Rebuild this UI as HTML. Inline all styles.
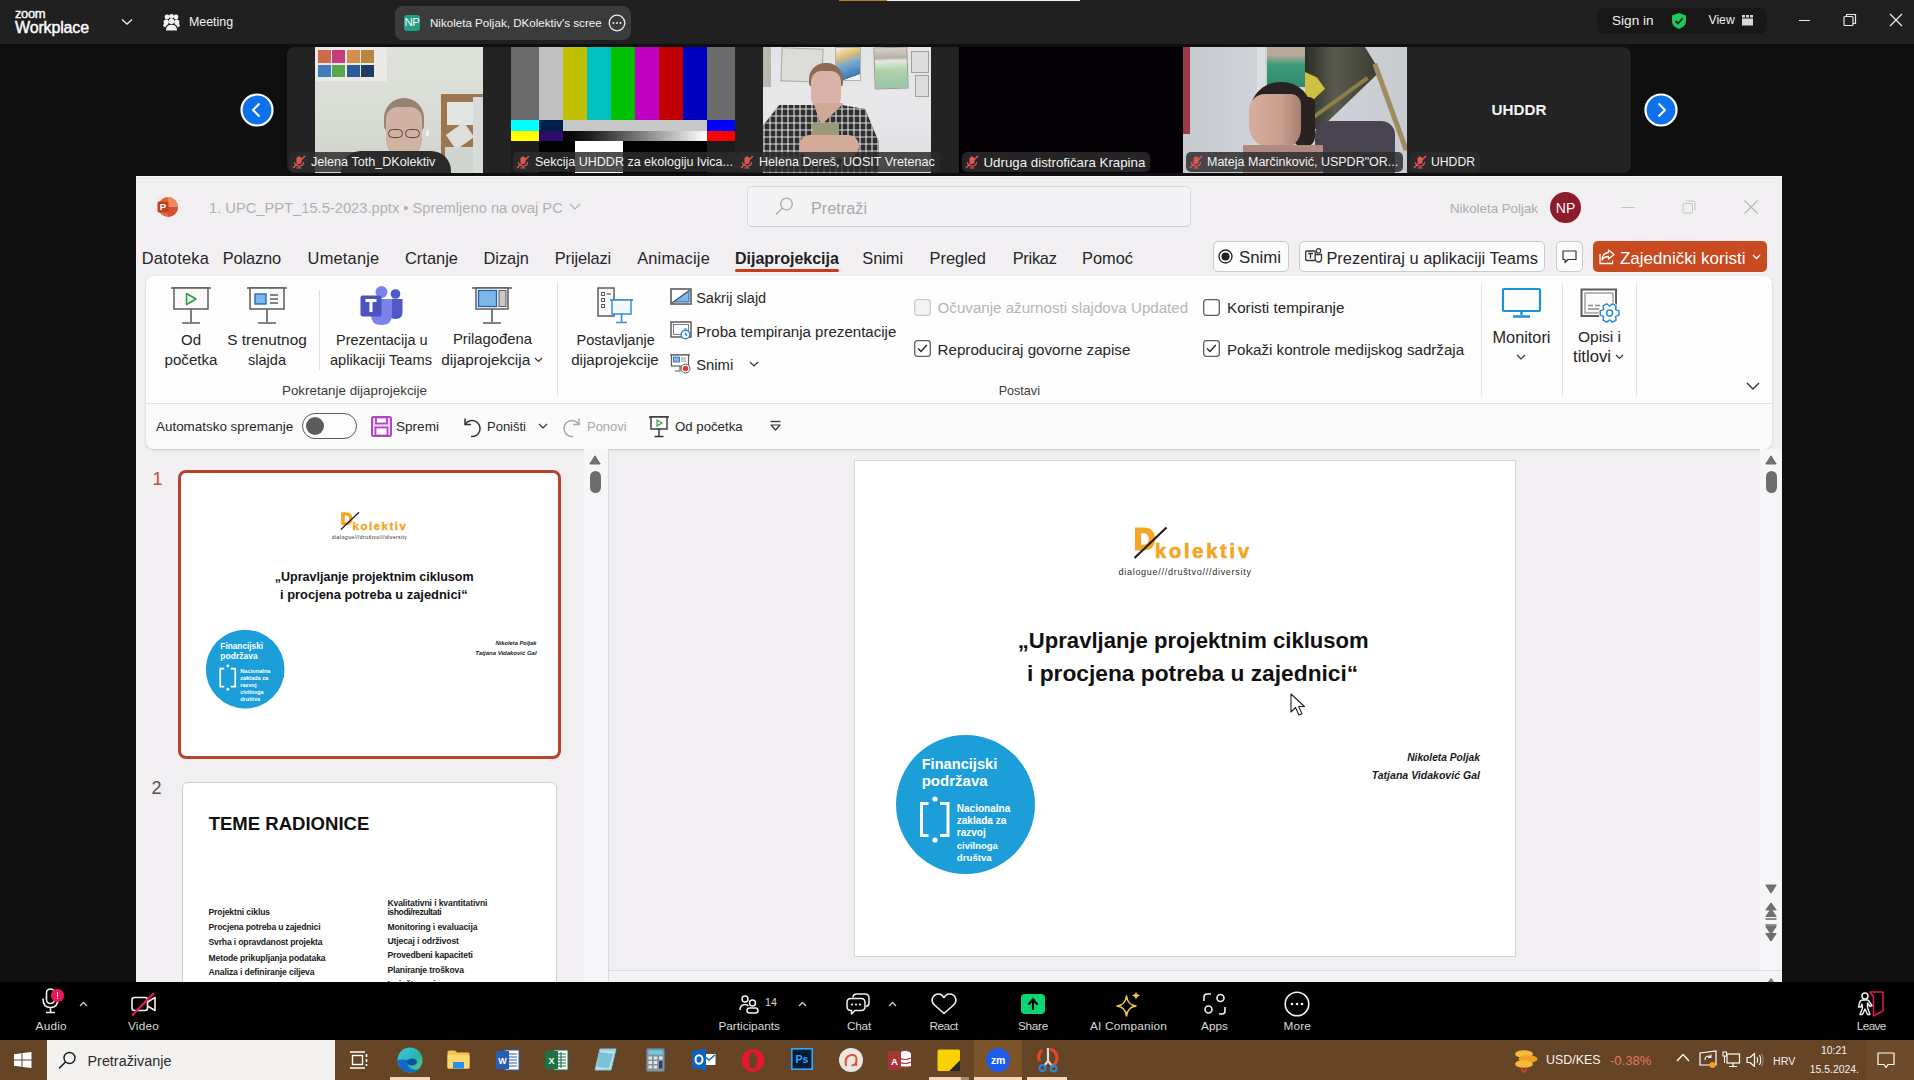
<!DOCTYPE html>
<html><head><meta charset="utf-8">
<style>
*{margin:0;padding:0;box-sizing:border-box}
html,body{width:1914px;height:1080px;overflow:hidden;background:#0f0f0f;font-family:"Liberation Sans",sans-serif}
.a{position:absolute}
.t{position:absolute;white-space:nowrap;line-height:1}
svg{position:absolute;overflow:visible}
</style></head><body>
<div class="a" style="left:0px;top:44px;width:1914px;height:132px;background:#0f0f0f"></div>
<!-- ZOOM TOP BAR -->
<div class="a" style="left:0;top:0;width:1914px;height:44px;background:#202020"></div>
<div class="a" style="left:839px;top:0;width:48px;height:1px;background:#b87a30"></div>
<div class="a" style="left:887px;top:0;width:193px;height:1px;background:#f4f4f4"></div>

<!-- VIDEO STRIP -->
<div id="strip" class="a" style="left:0;top:44px;width:1914px;height:132px;background:#0f0f0f"></div>

<!-- top bar content -->
<div class="t" style="left:15px;top:7px;font-size:13px;color:#fff;letter-spacing:-0.4px;-webkit-text-stroke:0.35px #fff">zoom</div>
<div class="t" style="left:15px;top:20px;font-size:16px;color:#fff;letter-spacing:-0.15px;-webkit-text-stroke:0.4px #fff">Workplace</div>
<svg style="left:121px;top:18px" width="12" height="8"><path d="M1 1.5 L6 6 L11 1.5" stroke="#e8e8e8" stroke-width="1.4" fill="none"/></svg>
<svg style="left:163px;top:14px" width="17" height="17" viewBox="0 0 17 17"><g fill="#f2f2f2"><circle cx="4" cy="3" r="2.4"/><circle cx="8.5" cy="2.3" r="2.4"/><circle cx="13" cy="3" r="2.4"/><circle cx="3.2" cy="8" r="2.6"/><circle cx="13.8" cy="8" r="2.6"/><circle cx="8.5" cy="7.3" r="2.8"/><path d="M3 16.5 Q3 10.8 8.5 10.8 Q14 10.8 14 16.5 Z"/><path d="M0 12 Q0 9.5 3 9.5 L5 10.5 Q2 12 2.5 13.5Z"/><path d="M17 12 Q17 9.5 14 9.5 L12 10.5 Q15 12 14.5 13.5Z"/></g></svg>
<div class="t" style="left:189px;top:16px;font-size:12.4px;color:#f0f0f0">Meeting</div>
<div class="a" style="left:395px;top:6px;width:236px;height:34px;background:#3b3b3b;border-radius:8px"></div>
<div class="a" style="left:404px;top:15px;width:16px;height:16px;background:#23a084;border-radius:3px"></div>
<div class="t" style="left:404px;top:17px;width:16px;text-align:center;font-size:11.5px;color:#f4f4f4;letter-spacing:-0.6px">NP</div>
<div class="t" style="left:430px;top:17px;font-size:11.6px;color:#f4f4f4">Nikoleta Poljak, DKolektiv's scree</div>
<svg style="left:608px;top:14px" width="18" height="18"><circle cx="9" cy="9" r="7.8" stroke="#e8e8e8" stroke-width="1.3" fill="none"/><circle cx="5.5" cy="9" r="1" fill="#e8e8e8"/><circle cx="9" cy="9" r="1" fill="#e8e8e8"/><circle cx="12.5" cy="9" r="1" fill="#e8e8e8"/></svg>

<div class="a" style="left:1597px;top:8px;width:170px;height:26px;background:#181818;border-radius:8px"></div>
<div class="t" style="left:1612px;top:14px;font-size:13.6px;color:#f0f0f0">Sign in</div>
<svg style="left:1670px;top:12px" width="18" height="18" viewBox="0 0 18 18"><path d="M9 1 L16 3.5 L16 9 Q16 14.5 9 17 Q2 14.5 2 9 L2 3.5 Z" fill="#22c55e"/><path d="M5.5 9 L8 11.5 L12.5 6.5" stroke="#0f2e14" stroke-width="1.8" fill="none"/></svg>
<div class="t" style="left:1708.5px;top:14px;font-size:12.2px;color:#f0f0f0">View</div>
<svg style="left:1742px;top:15px" width="11" height="11"><rect x="0" y="3.5" width="11" height="7" fill="#d8d8d8"/><rect x="0" y="0" width="3" height="2.5" fill="#d8d8d8"/><rect x="4" y="0" width="3" height="2.5" fill="#d8d8d8"/><rect x="8" y="0" width="3" height="2.5" fill="#d8d8d8"/></svg>
<div class="a" style="left:1799px;top:19.5px;width:11px;height:1.2px;background:#e8e8e8"></div>
<svg style="left:1843px;top:13px" width="14" height="14"><rect x="1" y="3.5" width="9" height="9" stroke="#e8e8e8" stroke-width="1.2" fill="none" rx="1"/><path d="M3.5 3.5 V1.5 H12.5 V10.5 H10" stroke="#e8e8e8" stroke-width="1.2" fill="none"/></svg>
<svg style="left:1889px;top:13px" width="14" height="14"><path d="M1 1 L13 13 M13 1 L1 13" stroke="#e8e8e8" stroke-width="1.3"/></svg>

<!-- VIDEO STRIP content -->
<div class="a" style="left:287px;top:47px;width:1344px;height:126px;background:#232323;border-radius:8px"></div>
<!-- arrows -->
<svg style="left:240px;top:93px" width="34" height="34"><circle cx="17" cy="17" r="15.5" fill="#0e71eb" stroke="#fff" stroke-width="2.2"/><path d="M19.5 10.5 L13 17 L19.5 23.5" stroke="#fff" stroke-width="2" fill="none"/></svg>
<svg style="left:1644px;top:93px" width="34" height="34"><circle cx="17" cy="17" r="15.5" fill="#0e71eb" stroke="#fff" stroke-width="2.2"/><path d="M14.5 10.5 L21 17 L14.5 23.5" stroke="#fff" stroke-width="2" fill="none"/></svg>

<!-- tile1 Jelena -->
<div class="a" style="left:315px;top:47px;width:168px;height:126px;overflow:hidden;background:linear-gradient(180deg,#dde1da 0%,#d8dcd5 55%,#cfd3cc 100%)">
  <div class="a" style="left:0;top:0;width:72px;height:34px;background:#e9e9e6"></div>
  <div class="a" style="left:2.5px;top:3px;width:13px;height:12.5px;background:#cf6a4c"></div>
  <div class="a" style="left:17px;top:3px;width:13px;height:12.5px;background:#c73c7c"></div>
  <div class="a" style="left:31.5px;top:3px;width:13px;height:12.5px;background:#d68d4f"></div>
  <div class="a" style="left:46px;top:3px;width:13px;height:12.5px;background:#b8863e"></div>
  <div class="a" style="left:2.5px;top:17.5px;width:13px;height:12.5px;background:#3f7dbf"></div>
  <div class="a" style="left:17px;top:17.5px;width:13px;height:12.5px;background:#5aa64a"></div>
  <div class="a" style="left:31.5px;top:17.5px;width:13px;height:12.5px;background:#2c5b9b"></div>
  <div class="a" style="left:46px;top:17.5px;width:13px;height:12.5px;background:#203c63"></div>
  <div class="a" style="left:126px;top:47px;width:42px;height:79px;background:#9c764e"></div>
  <div class="a" style="left:132px;top:55px;width:27px;height:23px;background:#e2e5e2"></div>
  <div class="a" style="left:134px;top:80px;width:22px;height:18px;background:#dcdfdc;transform:rotate(-35deg)"></div>
  <div class="a" style="left:158px;top:50px;width:10px;height:76px;background:#d8dad8"></div>
  <div class="a" style="left:130px;top:100px;width:28px;height:26px;background:#d0d4ce"></div>
  <div class="a" style="left:69px;top:51px;width:40px;height:34px;background:#958472;border-radius:20px 20px 6px 6px"></div>
  <div class="a" style="left:71px;top:60px;width:36px;height:50px;background:#cfb2a2;border-radius:12px 12px 16px 16px"></div>
  <div class="a" style="left:73px;top:82px;width:15px;height:9px;border:1px solid #5a4038;border-radius:5px"></div>
  <div class="a" style="left:90px;top:82px;width:15px;height:9px;border:1px solid #5a4038;border-radius:5px"></div>
  <div class="a" style="left:111px;top:83px;width:3px;height:6px;background:#f0f0f0;border-radius:2px"></div>
  <div class="a" style="left:26px;top:104px;width:110px;height:26px;background:#2a2a2c;border-radius:20px 20px 0 0"></div>
</div>
<!-- tile2 colorbars -->
<div class="a" style="left:511px;top:47px;width:224px;height:126px;overflow:hidden;background:#1c1c1c">
  <div class="a" style="left:0;top:0;width:28px;height:73px;background:#6b6b6b"></div>
  <div class="a" style="left:28px;top:0;width:24px;height:73px;background:#c0c0c0"></div>
  <div class="a" style="left:52px;top:0;width:24px;height:73px;background:#c0c000"></div>
  <div class="a" style="left:76px;top:0;width:24px;height:73px;background:#00c0c0"></div>
  <div class="a" style="left:100px;top:0;width:24px;height:73px;background:#00c000"></div>
  <div class="a" style="left:124px;top:0;width:24px;height:73px;background:#c000c0"></div>
  <div class="a" style="left:148px;top:0;width:24px;height:73px;background:#c00000"></div>
  <div class="a" style="left:172px;top:0;width:24px;height:73px;background:#0000c0"></div>
  <div class="a" style="left:196px;top:0;width:28px;height:73px;background:#6b6b6b"></div>
  <div class="a" style="left:0;top:73px;width:28px;height:11px;background:#00ffff"></div>
  <div class="a" style="left:28px;top:73px;width:24px;height:11px;background:#00204c"></div>
  <div class="a" style="left:52px;top:73px;width:144px;height:11px;background:#c8c8c8"></div>
  <div class="a" style="left:196px;top:73px;width:28px;height:11px;background:#0000ff"></div>
  <div class="a" style="left:0;top:84px;width:28px;height:10px;background:#ffff00"></div>
  <div class="a" style="left:28px;top:84px;width:24px;height:10px;background:#2f0a6e"></div>
  <div class="a" style="left:52px;top:84px;width:144px;height:10px;background:linear-gradient(90deg,#000,#202020 20%,#808080 55%,#fff)"></div>
  <div class="a" style="left:196px;top:84px;width:28px;height:10px;background:#ff0000"></div>
  <div class="a" style="left:28px;top:94px;width:168px;height:32px;background:#020202"></div>
  <div class="a" style="left:64px;top:94px;width:48px;height:32px;background:#ffffff"></div>
</div>
<!-- tile3 Helena -->
<div class="a" style="left:763px;top:47px;width:168px;height:126px;overflow:hidden;background:linear-gradient(180deg,#e4e4e6,#e8e8ea 50%,#dcdcde)">
  <div class="a" style="left:0;top:0;width:8px;height:40px;background:#b8b8b0"></div>
  <div class="a" style="left:18px;top:1px;width:42px;height:34px;background:#dcdcd8;border:1px solid #a8a8a4;transform:rotate(2deg)"></div>
  <div class="a" style="left:72px;top:0px;width:26px;height:34px;background:linear-gradient(160deg,#f0f0f0 0,#e8c070 25%,#78a8d0 50%,#3a7ab8 85%,#f0f0f0 86%);border:1px solid #b0b0b0"></div>
  <div class="a" style="left:111px;top:0px;width:34px;height:42px;background:linear-gradient(180deg,#d8d0c8 0,#b8b0a8 25%,#e4e8e0 32%,#b0d4a8 55%,#98c4a8 100%);border:1px solid #9a9a9a;transform:rotate(-2deg)"></div>
  <div class="a" style="left:148px;top:4px;width:18px;height:22px;border:1px solid #a0a0a0;background:#dcdcdc"></div>
  <div class="a" style="left:152px;top:28px;width:14px;height:22px;border:1px solid #a0a0a0;background:#dcdcdc"></div>
  <div class="a" style="left:46px;top:16px;width:34px;height:24px;background:#8e6a50;border-radius:16px 16px 4px 4px"></div>
  <div class="a" style="left:48px;top:24px;width:30px;height:40px;background:#d8b4a8;border-radius:10px 10px 14px 14px"></div>
  <div class="a" style="left:50px;top:56px;width:30px;height:30px;background:#cfa898"></div>
  <div class="a" style="left:0;top:58px;width:116px;height:68px;background:repeating-linear-gradient(90deg,rgba(230,230,230,0.55) 0 2px,transparent 2px 6px),repeating-linear-gradient(0deg,rgba(220,220,220,0.5) 0 2px,transparent 2px 7px),#2e2e2e;clip-path:polygon(14% 0,44% 0,50% 30%,68% 0,88% 6%,100% 55%,100% 100%,0 100%,0 30%)"></div>
  <div class="a" style="left:50px;top:76px;width:26px;height:16px;background:#9a9a78"></div>
  <div class="a" style="left:36px;top:88px;width:60px;height:22px;background:#d4aa98;border-radius:14px"></div>
</div>
<!-- tile4 dark -->
<div class="a" style="left:959px;top:47px;width:224px;height:126px;background:#040006"></div>
<!-- tile5 Mateja -->
<div class="a" style="left:1183px;top:47px;width:224px;height:126px;overflow:hidden;background:linear-gradient(90deg,#c6cacf,#d0d4d8 35%,#cdd1d5 70%,#c8ccd0)">
  <div class="a" style="left:0;top:0;width:7px;height:87px;background:#9a3a4a"></div>
  <div class="a" style="left:74px;top:0;width:8px;height:126px;background:#dcdee0"></div>
  <div class="a" style="left:84px;top:0;width:40px;height:40px;background:linear-gradient(180deg,#b8a898 0,#b8a898 20%,#3a9a7a 45%,#2f8a6c)"></div>
  <div class="a" style="left:122px;top:0;width:75px;height:82px;background:linear-gradient(90deg,#2c3026,#5a5a50 40%,#3a3c30);clip-path:polygon(0 0,80% 0,100% 30%,20% 100%,0 100%)"></div>
  <div class="a" style="left:122px;top:25px;width:20px;height:28px;background:#d0c040;clip-path:polygon(0 0,60% 20%,100% 60%,40% 100%,0 90%)"></div>
  <div class="a" style="left:130px;top:68px;width:66px;height:4px;background:#8c7e48;transform:rotate(-36deg);transform-origin:0 0"></div>
  <div class="a" style="left:205px;top:14px;width:5px;height:92px;background:#a08a60;transform:rotate(-20deg)"></div>
  <div class="a" style="left:132px;top:74px;width:80px;height:56px;background:#4a4450;border-radius:14px 14px 0 0"></div>
  <div class="a" style="left:67px;top:35px;width:62px;height:50px;background:#2a2220;border-radius:30px 30px 10px 10px"></div>
  <div class="a" style="left:110px;top:50px;width:22px;height:50px;background:#2a2220;border-radius:6px 6px 10px 10px"></div>
  <div class="a" style="left:66px;top:47px;width:52px;height:55px;background:linear-gradient(90deg,#d8ae9c,#c8a090 60%,#a88070);border-radius:16px 10px 20px 24px"></div>
  <div class="a" style="left:60px;top:98px;width:80px;height:28px;background:#b08a80"></div>
</div>
<!-- tile6 UHDDR -->
<div class="t" style="left:1407px;top:102px;width:224px;text-align:center;font-size:15.2px;font-weight:bold;color:#f4f4f4">UHDDR</div>

<!-- labels -->
<div class="a" style="left:289px;top:152px;width:151.4px;height:20px;background:rgba(44,44,44,0.84);border-radius:5px"></div>
<svg style="left:292px;top:155px" width="14" height="14" viewBox="0 0 14 14"><rect x="4.5" y="1.5" width="5" height="7.5" rx="2.5" fill="#e05656"/><path d="M2.5 7 Q2.5 11 7 11 Q11.5 11 11.5 7 M7 11 V13 M4.5 13 H9.5" stroke="#e05656" stroke-width="1.2" fill="none"/><path d="M1 13 L13 1" stroke="#e05656" stroke-width="1.4"/></svg>
<div class="t" style="left:311px;top:156px;font-size:12.6px;color:#f2f2f2">Jelena Toth_DKolektiv</div>
<div class="a" style="left:513px;top:152px;width:225.0px;height:20px;background:rgba(44,44,44,0.84);border-radius:5px"></div>
<svg style="left:516px;top:155px" width="14" height="14" viewBox="0 0 14 14"><rect x="4.5" y="1.5" width="5" height="7.5" rx="2.5" fill="#e05656"/><path d="M2.5 7 Q2.5 11 7 11 Q11.5 11 11.5 7 M7 11 V13 M4.5 13 H9.5" stroke="#e05656" stroke-width="1.2" fill="none"/><path d="M1 13 L13 1" stroke="#e05656" stroke-width="1.4"/></svg>
<div class="t" style="left:535px;top:156px;font-size:12.5px;color:#f2f2f2">Sekcija UHDDR za ekologiju Ivica...</div>
<div class="a" style="left:737px;top:152px;width:202.8px;height:20px;background:rgba(44,44,44,0.84);border-radius:5px"></div>
<svg style="left:740px;top:155px" width="14" height="14" viewBox="0 0 14 14"><rect x="4.5" y="1.5" width="5" height="7.5" rx="2.5" fill="#e05656"/><path d="M2.5 7 Q2.5 11 7 11 Q11.5 11 11.5 7 M7 11 V13 M4.5 13 H9.5" stroke="#e05656" stroke-width="1.2" fill="none"/><path d="M1 13 L13 1" stroke="#e05656" stroke-width="1.4"/></svg>
<div class="t" style="left:759px;top:156px;font-size:12.6px;color:#f2f2f2">Helena Dereš, UOSIT Vretenac</div>
<div class="a" style="left:962px;top:152px;width:188.4px;height:20px;background:rgba(44,44,44,0.84);border-radius:5px"></div>
<svg style="left:965px;top:155px" width="14" height="14" viewBox="0 0 14 14"><rect x="4.5" y="1.5" width="5" height="7.5" rx="2.5" fill="#e05656"/><path d="M2.5 7 Q2.5 11 7 11 Q11.5 11 11.5 7 M7 11 V13 M4.5 13 H9.5" stroke="#e05656" stroke-width="1.2" fill="none"/><path d="M1 13 L13 1" stroke="#e05656" stroke-width="1.4"/></svg>
<div class="t" style="left:983.5px;top:156px;font-size:13.3px;color:#f2f2f2">Udruga distrofičara Krapina</div>
<div class="a" style="left:1186px;top:152px;width:217.3px;height:20px;background:rgba(44,44,44,0.84);border-radius:5px"></div>
<svg style="left:1189px;top:155px" width="14" height="14" viewBox="0 0 14 14"><rect x="4.5" y="1.5" width="5" height="7.5" rx="2.5" fill="#e05656"/><path d="M2.5 7 Q2.5 11 7 11 Q11.5 11 11.5 7 M7 11 V13 M4.5 13 H9.5" stroke="#e05656" stroke-width="1.2" fill="none"/><path d="M1 13 L13 1" stroke="#e05656" stroke-width="1.4"/></svg>
<div class="t" style="left:1207px;top:156px;font-size:12.5px;color:#f2f2f2">Mateja Marčinković, USPDR"OR...</div>
<div class="a" style="left:1410px;top:152px;width:70.1px;height:20px;background:rgba(44,44,44,0.84);border-radius:5px"></div>
<svg style="left:1413px;top:155px" width="14" height="14" viewBox="0 0 14 14"><rect x="4.5" y="1.5" width="5" height="7.5" rx="2.5" fill="#e05656"/><path d="M2.5 7 Q2.5 11 7 11 Q11.5 11 11.5 7 M7 11 V13 M4.5 13 H9.5" stroke="#e05656" stroke-width="1.2" fill="none"/><path d="M1 13 L13 1" stroke="#e05656" stroke-width="1.4"/></svg>
<div class="t" style="left:1431px;top:156px;font-size:12.2px;color:#f2f2f2">UHDDR</div>



<div class="a" style="left:136px;top:176px;width:1646px;height:806px;background:#f1eff2"></div>
<div class="a" style="left:136px;top:176px;width:1646px;height:1px;background:#fafafa"></div>
<svg style="left:157px;top:197px" width="21" height="21"><circle cx="11" cy="10" r="10" fill="#e0683e"/><path d="M11 0 A10 10 0 0 1 21 10 L11 10Z" fill="#f08a5e"/><path d="M11 10 L21 10 A10 10 0 0 1 11 20Z" fill="#d2522c"/><rect x="0.5" y="4.5" width="11" height="11" rx="1.5" fill="#c1401e"/><text x="6" y="13.3" font-size="9.5" font-weight="bold" fill="#fff" text-anchor="middle" font-family="Liberation Sans">P</text></svg>
<div class="t" style="left:209.00px;top:200.56px;font-size:14.70px;color:#b0b0b0">1. UPC_PPT_15.5-2023.pptx • Spremljeno na ovaj PC</div>
<svg style="left:569px;top:203px" width="12" height="7"><path d="M1 1 L6 6 L11 1" stroke="#b0b0b0" stroke-width="1.2" fill="none"/></svg>
<div class="a" style="left:747px;top:186px;width:444px;height:41px;background:#f3f2f5;border:1px solid #d9d8db;border-bottom-color:#c9c8cb;border-radius:5px"></div>
<svg style="left:775px;top:197px" width="19" height="19"><circle cx="11.5" cy="7" r="5.8" stroke="#a9a9a9" stroke-width="1.3" fill="none"/><path d="M7.3 11.2 L1 17.5" stroke="#a9a9a9" stroke-width="1.4"/></svg>
<div class="t" style="left:811.00px;top:200.24px;font-size:16.25px;color:#a9a9a9">Pretraži</div>
<div class="t" style="left:1450.00px;top:201.74px;font-size:13.30px;color:#ababab">Nikoleta Poljak</div>
<div class="a" style="left:1550px;top:192px;width:31px;height:31px;background:#8c1b2c;border-radius:50%"></div>
<div class="t" style="left:1555.78px;top:201.15px;font-size:14.00px;color:#f4f4f4">NP</div>
<div class="a" style="left:1621px;top:207px;width:14px;height:1px;background:#c2c2c2"></div>
<svg style="left:1682px;top:200px" width="14" height="14"><rect x="1" y="3.5" width="9.5" height="9.5" rx="1.5" stroke="#c2c2c2" stroke-width="1" fill="none"/><path d="M3.5 1 H11 Q13 1 13 3 V10.5" stroke="#c2c2c2" stroke-width="1" fill="none"/></svg>
<svg style="left:1744px;top:200px" width="14" height="14"><path d="M0.5 0.5 L13.5 13.5 M13.5 0.5 L0.5 13.5" stroke="#b8b8b8" stroke-width="1.2"/></svg>
<div class="t" style="left:141.70px;top:250.42px;font-size:16.40px;color:#262626;letter-spacing:0.220px">Datoteka</div>
<div class="t" style="left:222.70px;top:250.42px;font-size:16.40px;color:#262626;letter-spacing:-0.138px">Polazno</div>
<div class="t" style="left:307.60px;top:250.42px;font-size:16.40px;color:#262626;letter-spacing:0.214px">Umetanje</div>
<div class="t" style="left:405.00px;top:250.42px;font-size:16.40px;color:#262626;letter-spacing:0.019px">Crtanje</div>
<div class="t" style="left:483.40px;top:250.42px;font-size:16.40px;color:#262626;letter-spacing:0.004px">Dizajn</div>
<div class="t" style="left:554.80px;top:250.42px;font-size:16.40px;color:#262626;letter-spacing:-0.135px">Prijelazi</div>
<div class="t" style="left:637.20px;top:250.42px;font-size:16.40px;color:#262626;letter-spacing:0.189px">Animacije</div>
<div class="t" style="left:862.30px;top:250.42px;font-size:16.40px;color:#262626;letter-spacing:-0.062px">Snimi</div>
<div class="t" style="left:929.60px;top:250.42px;font-size:16.40px;color:#262626;letter-spacing:-0.019px">Pregled</div>
<div class="t" style="left:1012.70px;top:250.42px;font-size:16.40px;color:#262626;letter-spacing:-0.261px">Prikaz</div>
<div class="t" style="left:1082.00px;top:250.42px;font-size:16.40px;color:#262626;letter-spacing:-0.009px">Pomoć</div>
<div class="t" style="left:735.00px;top:250.76px;font-size:16.00px;color:#1f1f1f;font-weight:bold;letter-spacing:-0.018px">Dijaprojekcija</div>
<div class="a" style="left:735px;top:269px;width:104px;height:3px;background:#c43e1c;border-radius:2px"></div>
<div class="a" style="left:1213px;top:241px;width:76px;height:31px;background:#fbfbfc;border:1px solid #c9c9cc;border-radius:5px"></div>
<svg style="left:1218px;top:249px" width="15" height="15"><circle cx="7.5" cy="7.5" r="6.5" stroke="#222" stroke-width="1.3" fill="none"/><circle cx="7.5" cy="7.5" r="4" fill="#222"/></svg>
<div class="t" style="left:1239.00px;top:249.78px;font-size:16.80px;color:#262626">Snimi</div>
<div class="a" style="left:1299px;top:241px;width:246px;height:31px;background:#fbfbfc;border:1px solid #c9c9cc;border-radius:5px"></div>
<svg style="left:1305px;top:248px" width="18" height="16"><rect x="0.7" y="3" width="9.5" height="9.5" rx="1" stroke="#333" stroke-width="1.3" fill="none"/><path d="M3 5.5 H8 M5.5 5.5 V10.5" stroke="#333" stroke-width="1.3"/><circle cx="13.5" cy="2.8" r="2.2" stroke="#333" stroke-width="1.2" fill="none"/><path d="M10.5 6.5 H16.5 V11 Q16.5 14 13.5 14 Q11 14 10.3 12" stroke="#333" stroke-width="1.3" fill="none"/></svg>
<div class="t" style="left:1326.40px;top:250.09px;font-size:16.43px;color:#262626">Prezentiraj u aplikaciji Teams</div>
<div class="a" style="left:1556px;top:241px;width:27px;height:31px;background:#fbfbfc;border:1px solid #c9c9cc;border-radius:5px"></div>
<svg style="left:1562px;top:250px" width="15" height="14"><path d="M1 1 H14 V9.5 H6 L3 12.5 V9.5 H1 Z" stroke="#333" stroke-width="1.2" fill="none" stroke-linejoin="round"/></svg>
<div class="a" style="left:1593px;top:241px;width:174px;height:31px;background:#c94a21;border-radius:5px"></div>
<svg style="left:1599px;top:248px" width="17" height="17"><path d="M9.5 2 L15 6.5 L9.5 11 V8.5 Q5 8.5 3 12 Q3.5 5 9.5 4.5 Z" stroke="#fff" stroke-width="1.3" fill="none" stroke-linejoin="round"/><path d="M1 6 V15.5 H13.5 V12.5" stroke="#fff" stroke-width="1.3" fill="none"/></svg>
<div class="t" style="left:1620.00px;top:249.63px;font-size:16.98px;color:#ffffff">Zajednički koristi</div>
<svg style="left:1752px;top:254px" width="9" height="6"><path d="M1 1 L4.5 4.5 L8 1" stroke="#fff" stroke-width="1.3" fill="none"/></svg>
<div class="a" style="left:146px;top:276px;width:1626px;height:173px;background:#fdfdfd;border-radius:8px;box-shadow:0 1px 2.5px rgba(0,0,0,0.18)"></div>
<div class="a" style="left:146px;top:403px;width:1626px;height:1px;background:#e1e1e3"></div>
<div class="a" style="left:146px;top:404px;width:1626px;height:45px;background:#fafafa;border-radius:0 0 8px 8px"></div>
<svg style="left:171px;top:287px" width="40" height="38"><path d="M0 1 H40" stroke="#5c5c5c" stroke-width="1.6"/><rect x="3" y="1" width="34" height="21" stroke="#5c5c5c" stroke-width="1.5" fill="#fafafa"/><path d="M20 22 V35 M11 36 H29" stroke="#5c5c5c" stroke-width="1.6"/><path d="M15.5 6.5 L25 12 L15.5 17.5 Z" stroke="#2e9a4a" stroke-width="1.5" fill="#e6f4e8" stroke-linejoin="round"/></svg>
<div class="t" style="left:181.00px;top:332.30px;font-size:15.00px;color:#262626">Od</div>
<div class="t" style="left:164.60px;top:352.24px;font-size:15.07px;color:#262626">početka</div>
<svg style="left:247px;top:287px" width="40" height="38"><path d="M0 1 H40" stroke="#5c5c5c" stroke-width="1.6"/><rect x="3" y="1" width="34" height="21" stroke="#5c5c5c" stroke-width="1.5" fill="#fafafa"/><path d="M20 22 V35 M11 36 H29" stroke="#5c5c5c" stroke-width="1.6"/><rect x="8" y="7" width="11" height="10" fill="#7fb6ea" stroke="#1b65b8" stroke-width="1.3"/><path d="M23 8 H31 M23 12 H31 M23 16 H31" stroke="#5c5c5c" stroke-width="1.3"/></svg>
<div class="t" style="left:227.30px;top:332.00px;font-size:15.36px;color:#262626">S trenutnog</div>
<div class="t" style="left:248.00px;top:352.69px;font-size:14.54px;color:#262626">slajda</div>
<div class="a" style="left:319px;top:290px;width:1px;height:80px;background:#e3e3e3"></div>
<svg style="left:360px;top:286px" width="43" height="40"><circle cx="21.5" cy="6" r="6" fill="#7b83eb"/><circle cx="35.5" cy="8" r="4.8" fill="#5059c9"/><path d="M29 13 H42.5 V26 Q42.5 33 36 33 Q31 33 29 30 Z" fill="#5059c9"/><path d="M11 13 H32 V29 Q32 39 21.5 39 Q11 39 11 29 Z" fill="#7b83eb"/><rect x="0.5" y="9.5" width="21" height="21" rx="2" fill="#4b53bc"/><path d="M5.5 14.5 H16.5 M11 14.5 V26" stroke="#fff" stroke-width="3"/></svg>
<div class="t" style="left:336.00px;top:332.76px;font-size:14.45px;color:#262626">Prezentacija u</div>
<div class="t" style="left:330.00px;top:352.64px;font-size:14.60px;color:#262626">aplikaciji Teams</div>
<svg style="left:472px;top:287px" width="40" height="38"><path d="M0 1 H40" stroke="#5c5c5c" stroke-width="1.6"/><rect x="4" y="1" width="32" height="21" stroke="#5c5c5c" stroke-width="1.5" fill="#fafafa"/><rect x="6.5" y="3.5" width="18" height="16" fill="#7fb6ea" stroke="#1b65b8" stroke-width="1.3"/><rect x="27" y="3.5" width="7" height="16" fill="#c8c8c8" stroke="#5c5c5c" stroke-width="1"/><path d="M20 22 V35 M11 36 H29" stroke="#5c5c5c" stroke-width="1.6"/></svg>
<div class="t" style="left:453.00px;top:332.47px;font-size:14.80px;color:#262626">Prilagođena</div>
<div class="t" style="left:441.30px;top:351.97px;font-size:15.40px;color:#262626">dijaprojekcija</div>
<svg style="left:534px;top:357px" width="9" height="6"><path d="M1 1 L4.5 4.5 L8 1" stroke="#333" stroke-width="1.2" fill="none"/></svg>
<div class="a" style="left:557px;top:282px;width:1px;height:114px;background:#e3e3e3"></div>
<div class="t" style="left:282.00px;top:384.18px;font-size:13.38px;color:#3a3a3a">Pokretanje dijaprojekcije</div>
<svg style="left:597px;top:287px" width="37" height="37"><rect x="1" y="1" width="16" height="28" stroke="#5c5c5c" stroke-width="1.5" fill="#fafafa"/><rect x="4.5" y="5.5" width="3" height="3" stroke="#5c5c5c" stroke-width="1" fill="none"/><rect x="4.5" y="11.5" width="3" height="3" stroke="#5c5c5c" stroke-width="1" fill="none"/><rect x="4.5" y="17.5" width="3" height="3" stroke="#5c5c5c" stroke-width="1" fill="none"/><path d="M9.5 7 H14" stroke="#5c5c5c" stroke-width="1.2"/><path d="M13 13 H36" stroke="#3a8fd0" stroke-width="1.6"/><rect x="15" y="13" width="19" height="14" stroke="#3a8fd0" stroke-width="1.5" fill="#f2f8fd"/><path d="M24.5 27 V35 M19 35.5 H30" stroke="#3a8fd0" stroke-width="1.6"/></svg>
<div class="t" style="left:576.45px;top:332.68px;font-size:14.56px;color:#262626">Postavljanje</div>
<div class="t" style="left:571.15px;top:352.16px;font-size:15.17px;color:#262626">dijaprojekcije</div>
<svg style="left:670px;top:288px" width="22" height="17"><rect x="1" y="1" width="20" height="15" stroke="#5c5c5c" stroke-width="1.6" fill="#fff"/><path d="M3 14 L19 3 V14 Z" fill="#7fb6ea" stroke="#1b65b8" stroke-width="1"/><path d="M2 15 L20 2" stroke="#5c5c5c" stroke-width="1.4"/></svg>
<div class="t" style="left:696.20px;top:291.04px;font-size:14.48px;color:#262626">Sakrij slajd</div>
<svg style="left:670px;top:321px" width="22" height="19"><rect x="1" y="1" width="20" height="15" stroke="#5c5c5c" stroke-width="1.5" fill="#fff"/><rect x="3.5" y="3.5" width="15" height="10" stroke="#5c5c5c" stroke-width="0.8" fill="none"/><circle cx="15.5" cy="13.5" r="4.3" stroke="#2b88d8" stroke-width="1.5" fill="#fff"/><path d="M15.5 11.5 V13.5 L17 14.8 M14 8 H17" stroke="#2b88d8" stroke-width="1.2"/></svg>
<div class="t" style="left:696.20px;top:324.24px;font-size:15.07px;color:#262626">Proba tempiranja prezentacije</div>
<svg style="left:670px;top:354px" width="22" height="20"><path d="M0 1 H20" stroke="#5c5c5c" stroke-width="1.3"/><rect x="1.5" y="1" width="17" height="11" stroke="#5c5c5c" stroke-width="1.2" fill="#fff"/><rect x="3.5" y="3" width="6" height="5" fill="#7fb6ea" stroke="#1b65b8" stroke-width="0.8"/><rect x="11" y="3" width="5" height="5" fill="#c8c8c8"/><path d="M10 12 V17 H5" stroke="#5c5c5c" stroke-width="1.2" fill="none"/><circle cx="15.5" cy="14.5" r="4.5" fill="#fff" stroke="#5c5c5c" stroke-width="1"/><circle cx="15.5" cy="14.5" r="2.8" fill="#e03a3a"/></svg>
<div class="t" style="left:696.20px;top:357.97px;font-size:14.80px;color:#262626">Snimi</div>
<svg style="left:749px;top:361px" width="10" height="6"><path d="M1 1 L5 5 L9 1" stroke="#333" stroke-width="1.2" fill="none"/></svg>
<svg style="left:914px;top:299px" width="17" height="17"><rect x="0.7" y="0.7" width="15.6" height="15.6" rx="2.5" stroke="#c9c9c9" stroke-width="1.3" fill="#f4f4f4"/></svg>
<div class="t" style="left:937.60px;top:300.18px;font-size:15.14px;color:#b6b6b6">Očuvanje ažurnosti slajdova Updated</div>
<svg style="left:914px;top:340px" width="17" height="17"><rect x="0.7" y="0.7" width="15.6" height="15.6" rx="2.5" stroke="#5e5e5e" stroke-width="1.3" fill="#fff"/><path d="M4 8.5 L7 11.5 L12.8 5" stroke="#262626" stroke-width="1.4" fill="none"/></svg>
<div class="t" style="left:937.60px;top:341.68px;font-size:15.15px;color:#262626">Reproduciraj govorne zapise</div>
<svg style="left:1203px;top:299px" width="17" height="17"><rect x="0.7" y="0.7" width="15.6" height="15.6" rx="2.5" stroke="#5e5e5e" stroke-width="1.3" fill="#fff"/></svg>
<div class="t" style="left:1227.00px;top:300.13px;font-size:15.21px;color:#262626">Koristi tempiranje</div>
<svg style="left:1203px;top:340px" width="17" height="17"><rect x="0.7" y="0.7" width="15.6" height="15.6" rx="2.5" stroke="#5e5e5e" stroke-width="1.3" fill="#fff"/><path d="M4 8.5 L7 11.5 L12.8 5" stroke="#262626" stroke-width="1.4" fill="none"/></svg>
<div class="t" style="left:1227.00px;top:341.68px;font-size:15.14px;color:#262626">Pokaži kontrole medijskog sadržaja</div>
<div class="t" style="left:998.70px;top:385.34px;font-size:12.59px;color:#3a3a3a">Postavi</div>
<div class="a" style="left:1481px;top:283px;width:1px;height:113px;background:#e3e3e3"></div>
<svg style="left:1502px;top:288px" width="39" height="30"><rect x="1" y="1" width="37" height="22" rx="1" stroke="#1e8fd8" stroke-width="2.2" fill="#fff"/><path d="M19.5 23 V27 M11 28.5 H28" stroke="#1e8fd8" stroke-width="2.4"/></svg>
<div class="t" style="left:1492.50px;top:328.60px;font-size:16.31px;color:#262626">Monitori</div>
<svg style="left:1516px;top:354px" width="10" height="6"><path d="M1 1 L5 5 L9 1" stroke="#333" stroke-width="1.2" fill="none"/></svg>
<div class="a" style="left:1562px;top:283px;width:1px;height:113px;background:#e3e3e3"></div>
<svg style="left:1580px;top:288px" width="41" height="36"><rect x="1.5" y="1.5" width="34.5" height="26.5" stroke="#5c5c5c" stroke-width="2" fill="#fff"/><rect x="5" y="5" width="28" height="20" stroke="#8a8a8a" stroke-width="1.2" fill="#fafafa"/><path d="M8 17.5 H13 M15 17.5 H20 M8 21 H20" stroke="#8a8a8a" stroke-width="1.3"/><circle cx="29.6" cy="25" r="11" fill="#fff"/><path d="M35.74 21.64 L38.97 22.90 L38.97 27.10 L35.74 28.36 L35.58 28.64 L36.10 32.07 L32.47 34.16 L29.77 32.00 L29.43 32.00 L26.73 34.16 L23.10 32.07 L23.62 28.64 L23.46 28.36 L20.23 27.10 L20.23 22.90 L23.46 21.64 L23.62 21.36 L23.10 17.93 L26.73 15.84 L29.43 18.00 L29.77 18.00 L32.47 15.84 L36.10 17.93 L35.58 21.36 Z" stroke="#2b88d8" stroke-width="1.5" fill="#fff" stroke-linejoin="round"/><circle cx="29.6" cy="25" r="3" stroke="#2b88d8" stroke-width="1.5" fill="none"/></svg>
<div class="t" style="left:1578.00px;top:329.30px;font-size:15.48px;color:#262626">Opisi i</div>
<div class="t" style="left:1573.00px;top:348.68px;font-size:16.68px;color:#262626">titlovi</div>
<svg style="left:1615px;top:354px" width="9" height="6"><path d="M1 1 L4.5 4.5 L8 1" stroke="#333" stroke-width="1.2" fill="none"/></svg>
<div class="a" style="left:1636px;top:283px;width:1px;height:113px;background:#e3e3e3"></div>
<svg style="left:1746px;top:382px" width="14" height="8"><path d="M1 1 L7 7 L13 1" stroke="#333" stroke-width="1.4" fill="none"/></svg>
<div class="t" style="left:156.00px;top:419.63px;font-size:13.43px;color:#262626">Automatsko spremanje</div>
<div class="a" style="left:302px;top:413px;width:55px;height:26px;background:#fdfdfd;border:1px solid #5a5a5a;border-radius:13px"></div>
<div class="a" style="left:306px;top:417px;width:18px;height:18px;background:#5c5c5c;border-radius:50%"></div>
<svg style="left:371px;top:416px" width="21" height="21"><rect x="1" y="1" width="19" height="19" rx="1.5" stroke="#b146c2" stroke-width="2" fill="#f1d7f5"/><rect x="5" y="1.5" width="11" height="6" fill="#fff" stroke="#b146c2" stroke-width="1.8"/><rect x="4.5" y="11.5" width="12" height="8" fill="#fff" stroke="#b146c2" stroke-width="1.8"/></svg>
<div class="t" style="left:396.00px;top:419.51px;font-size:13.57px;color:#262626">Spremi</div>
<svg style="left:462px;top:416px" width="20" height="22"><path d="M3 2.5 V8.5 H9" stroke="#333" stroke-width="1.5" fill="none"/><path d="M3.5 8 A8 8 0 1 1 9 20.5" stroke="#333" stroke-width="1.5" fill="none"/></svg>
<div class="t" style="left:487.00px;top:420.00px;font-size:12.99px;color:#262626">Poništi</div>
<svg style="left:538px;top:423px" width="10" height="6"><path d="M1 1 L5 5 L9 1" stroke="#333" stroke-width="1.2" fill="none"/></svg>
<svg style="left:561px;top:416px" width="21" height="22"><path d="M18 2.5 V8.5 H12" stroke="#a8a8a8" stroke-width="1.5" fill="none"/><path d="M17.5 8 A8 8 0 1 0 12 20.5" stroke="#a8a8a8" stroke-width="1.5" fill="none"/></svg>
<div class="t" style="left:587.00px;top:420.01px;font-size:12.98px;color:#a8a8a8">Ponovi</div>
<svg style="left:649px;top:416px" width="20" height="22"><path d="M0 1 H20" stroke="#333" stroke-width="1.5"/><rect x="2" y="1" width="16" height="12" stroke="#333" stroke-width="1.4" fill="#fff"/><path d="M8 4 L13 7 L8 10 Z" fill="#e6f4e8" stroke="#2e9a4a" stroke-width="1.1"/><path d="M10 13 V20 M5.5 20.5 H14.5" stroke="#333" stroke-width="1.4"/></svg>
<div class="t" style="left:675.00px;top:419.81px;font-size:13.22px;color:#262626">Od početka</div>
<svg style="left:769px;top:420px" width="13" height="13"><path d="M1.5 1.5 H11.5" stroke="#333" stroke-width="1.3"/><path d="M2 5 L6.5 10 L11 5 Z" stroke="#333" stroke-width="1.2" fill="none" stroke-linejoin="round"/></svg>
<div class="t" style="left:152.50px;top:469.76px;font-size:18.00px;color:#c4502a">1</div>
<div class="a" style="left:178px;top:470px;width:383px;height:289px;background:#ffffff;border:3.5px solid #b8432b;border-radius:8px"></div>
<div class="t" style="left:151.50px;top:778.76px;font-size:18.00px;color:#505050">2</div>
<div class="a" style="left:182px;top:782px;width:375px;height:240px;background:#ffffff;border:1px solid #cfcfcf;border-radius:6px"></div>
<div class="a" style="left:584px;top:449px;width:24px;height:533px;background:#f6f6f8"></div>
<div class="a" style="left:608px;top:449px;width:1px;height:533px;background:#dcdcde"></div>
<svg style="left:589px;top:455px" width="12" height="10"><path d="M6 0.8 L11.2 9 H0.8 Z" fill="#707070" stroke="#707070" stroke-width="1" stroke-linejoin="round"/></svg>
<div class="a" style="left:589.5px;top:471px;width:11px;height:22px;background:#6e6e6e;border-radius:5.5px"></div>
<div class="a" style="left:181.5px;top:473.5px;width:662px;height:496px;transform:scale(0.5665);transform-origin:0 0;overflow:hidden"><svg style="left:279.5px;top:66.5px" width="34" height="32"><path d="M1 0.5 H9 Q21 0.5 21 12 Q21 23.5 9 23.5 H1 Z M7.2 6.3 V17.7 H9 Q14.8 17.7 14.8 12 Q14.8 6.3 9 6.3 Z" fill="#f4a524" fill-rule="evenodd"/><path d="M0.5 31 L32.5 0.5" stroke="#1a1a1a" stroke-width="2.1"/></svg>
<div class="t" style="left:301.00px;top:81.07px;font-size:20.00px;color:#f4a524;font-weight:bold;-webkit-text-stroke:0.7px #f4a524;letter-spacing:2.789px">kolektiv</div>
<div class="t" style="left:264.50px;top:107.88px;font-size:9.00px;color:#2a2a2a;letter-spacing:0.721px">dialogue///društvo///diversity</div>
<div class="t" style="left:163.80px;top:170.11px;font-size:22.08px;color:#111;font-weight:bold">„Upravljanje projektnim ciklusom</div>
<div class="t" style="left:173.00px;top:201.53px;font-size:22.76px;color:#111;font-weight:bold">i procjena potreba u zajednici“</div>
<div class="a" style="left:41.5px;top:275px;width:139px;height:139px;background:#1c9fd9;border-radius:50%"></div>
<div class="t" style="left:67.70px;top:296.73px;font-size:14.61px;color:#fff;font-weight:bold">Financijski</div>
<div class="t" style="left:67.70px;top:313.27px;font-size:15.03px;color:#fff;font-weight:bold">podržava</div>
<svg style="left:66px;top:336px" width="31" height="46"><path d="M8.5 7.5 H1.5 V39.5 H8.5 M20 7.5 H28 V39.5 H20" stroke="#fff" stroke-width="3" fill="none"/><circle cx="15" cy="3" r="2.6" fill="#fff"/><circle cx="15" cy="44" r="2.6" fill="#fff"/></svg>
<div class="t" style="left:102.80px;top:343.51px;font-size:10.03px;color:#fff;font-weight:bold">Nacionalna</div>
<div class="t" style="left:102.80px;top:355.73px;font-size:10.01px;color:#fff;font-weight:bold">zaklada za</div>
<div class="t" style="left:102.80px;top:367.91px;font-size:10.03px;color:#fff;font-weight:bold">razvoj</div>
<div class="t" style="left:102.80px;top:380.59px;font-size:9.46px;color:#fff;font-weight:bold">civilnoga</div>
<div class="t" style="left:102.80px;top:392.60px;font-size:9.69px;color:#fff;font-weight:bold">društva</div>
<div class="t" style="left:553.20px;top:292.54px;font-size:10.23px;color:#1a1a1a;font-weight:bold;font-style:italic">Nikoleta Poljak</div>
<div class="t" style="left:517.70px;top:310.17px;font-size:10.55px;color:#1a1a1a;font-weight:bold;font-style:italic">Tatjana Vidaković Gal</div>
</div>
<div class="t" style="left:208.70px;top:815.30px;font-size:18.54px;color:#111;font-weight:bold">TEME RADIONICE</div>
<div class="t" style="left:208.50px;top:908.22px;font-size:8.60px;color:#1a1a1a;font-weight:bold;letter-spacing:-0.129px">Projektni ciklus</div>
<div class="t" style="left:208.50px;top:922.72px;font-size:8.60px;color:#1a1a1a;font-weight:bold;letter-spacing:-0.165px">Procjena potreba u zajednici</div>
<div class="t" style="left:208.50px;top:938.22px;font-size:8.60px;color:#1a1a1a;font-weight:bold;letter-spacing:-0.162px">Svrha i opravdanost projekta</div>
<div class="t" style="left:208.50px;top:953.72px;font-size:8.60px;color:#1a1a1a;font-weight:bold;letter-spacing:-0.139px">Metode prikupljanja podataka</div>
<div class="t" style="left:208.50px;top:968.22px;font-size:8.60px;color:#1a1a1a;font-weight:bold;letter-spacing:-0.119px">Analiza i definiranje ciljeva</div>
<div class="t" style="left:387.40px;top:898.72px;font-size:8.60px;color:#1a1a1a;font-weight:bold;letter-spacing:-0.115px">Kvalitativni i kvantitativni</div>
<div class="t" style="left:387.40px;top:908.22px;font-size:8.60px;color:#1a1a1a;font-weight:bold;letter-spacing:-0.418px">ishodi/rezultati</div>
<div class="t" style="left:387.40px;top:922.72px;font-size:8.60px;color:#1a1a1a;font-weight:bold;letter-spacing:-0.118px">Monitoring i evaluacija</div>
<div class="t" style="left:387.40px;top:936.72px;font-size:8.60px;color:#1a1a1a;font-weight:bold;letter-spacing:-0.110px">Utjecaj i održivost</div>
<div class="t" style="left:387.40px;top:951.22px;font-size:8.60px;color:#1a1a1a;font-weight:bold;letter-spacing:-0.162px">Provedbeni kapaciteti</div>
<div class="t" style="left:387.40px;top:965.72px;font-size:8.60px;color:#1a1a1a;font-weight:bold;letter-spacing:-0.150px">Planiranje troškova</div>
<div class="t" style="left:387.40px;top:980.22px;font-size:8.60px;color:#1a1a1a;font-weight:bold">Izvještavanje o</div>
<div class="a" style="left:854px;top:460px;width:662px;height:497px;background:#ffffff;border:1px solid #d6d6d8"></div>
<div class="a" style="left:854px;top:460px;width:662px;height:496px"><svg style="left:279.5px;top:66.5px" width="34" height="32"><path d="M1 0.5 H9 Q21 0.5 21 12 Q21 23.5 9 23.5 H1 Z M7.2 6.3 V17.7 H9 Q14.8 17.7 14.8 12 Q14.8 6.3 9 6.3 Z" fill="#f4a524" fill-rule="evenodd"/><path d="M0.5 31 L32.5 0.5" stroke="#1a1a1a" stroke-width="2.1"/></svg>
<div class="t" style="left:301.00px;top:81.07px;font-size:20.00px;color:#f4a524;font-weight:bold;-webkit-text-stroke:0.7px #f4a524;letter-spacing:2.789px">kolektiv</div>
<div class="t" style="left:264.50px;top:107.88px;font-size:9.00px;color:#2a2a2a;letter-spacing:0.721px">dialogue///društvo///diversity</div>
<div class="t" style="left:163.80px;top:170.11px;font-size:22.08px;color:#111;font-weight:bold">„Upravljanje projektnim ciklusom</div>
<div class="t" style="left:173.00px;top:201.53px;font-size:22.76px;color:#111;font-weight:bold">i procjena potreba u zajednici“</div>
<div class="a" style="left:41.5px;top:275px;width:139px;height:139px;background:#1c9fd9;border-radius:50%"></div>
<div class="t" style="left:67.70px;top:296.73px;font-size:14.61px;color:#fff;font-weight:bold">Financijski</div>
<div class="t" style="left:67.70px;top:313.27px;font-size:15.03px;color:#fff;font-weight:bold">podržava</div>
<svg style="left:66px;top:336px" width="31" height="46"><path d="M8.5 7.5 H1.5 V39.5 H8.5 M20 7.5 H28 V39.5 H20" stroke="#fff" stroke-width="3" fill="none"/><circle cx="15" cy="3" r="2.6" fill="#fff"/><circle cx="15" cy="44" r="2.6" fill="#fff"/></svg>
<div class="t" style="left:102.80px;top:343.51px;font-size:10.03px;color:#fff;font-weight:bold">Nacionalna</div>
<div class="t" style="left:102.80px;top:355.73px;font-size:10.01px;color:#fff;font-weight:bold">zaklada za</div>
<div class="t" style="left:102.80px;top:367.91px;font-size:10.03px;color:#fff;font-weight:bold">razvoj</div>
<div class="t" style="left:102.80px;top:380.59px;font-size:9.46px;color:#fff;font-weight:bold">civilnoga</div>
<div class="t" style="left:102.80px;top:392.60px;font-size:9.69px;color:#fff;font-weight:bold">društva</div>
<div class="t" style="left:553.20px;top:292.54px;font-size:10.23px;color:#1a1a1a;font-weight:bold;font-style:italic">Nikoleta Poljak</div>
<div class="t" style="left:517.70px;top:310.17px;font-size:10.55px;color:#1a1a1a;font-weight:bold;font-style:italic">Tatjana Vidaković Gal</div>
</div>
<div class="a" style="left:1760px;top:449px;width:22px;height:521px;background:#f6f6f8"></div>
<svg style="left:1765px;top:455px" width="12" height="10"><path d="M6 0.8 L11.2 9 H0.8 Z" fill="#707070" stroke="#707070" stroke-width="1" stroke-linejoin="round"/></svg>
<div class="a" style="left:1765.5px;top:471px;width:11px;height:22px;background:#6e6e6e;border-radius:5.5px"></div>
<svg style="left:1765px;top:884px" width="12" height="10"><path d="M6 9.2 L11.2 1 H0.8 Z" fill="#707070" stroke="#707070" stroke-width="1" stroke-linejoin="round"/></svg>
<svg style="left:1765px;top:902px" width="12" height="18"><path d="M6 0.8 L11.2 8 H0.8 Z M6 7 L11.2 14.5 H0.8 Z" fill="#707070" stroke="#707070" stroke-width="1" stroke-linejoin="round"/><path d="M0.5 17 H11.5" stroke="#707070" stroke-width="1.6"/></svg>
<svg style="left:1765px;top:924px" width="12" height="18"><path d="M0.5 1 H11.5" stroke="#707070" stroke-width="1.6"/><path d="M6 10 L11.2 2.5 H0.8 Z M6 17.2 L11.2 9.5 H0.8 Z" fill="#707070" stroke="#707070" stroke-width="1" stroke-linejoin="round"/></svg>
<div class="a" style="left:609px;top:970px;width:1173px;height:1px;background:#dcdcde"></div>
<div class="a" style="left:609px;top:971px;width:1173px;height:11px;background:#f4f3f6"></div>
<svg style="left:1764.5px;top:977px" width="12" height="6"><path d="M6 0.8 L11.2 8 H0.8 Z" fill="#7a7a7a"/></svg>
<svg style="left:1290px;top:693px" width="16" height="24"><path d="M1 1 V19 L5.5 14.5 L9 22 L12 20.7 L8.7 13.5 H14.5 Z" fill="#fff" stroke="#222" stroke-width="1.1" stroke-linejoin="round"/></svg>
<div class="a" style="left:0px;top:982px;width:1914px;height:58px;background:#000000"></div>
<svg style="left:42px;top:988px" width="18" height="26"><rect x="4.5" y="1" width="8" height="14.5" rx="4" stroke="#f2f2f2" stroke-width="1.6" fill="none"/><path d="M1 10.5 Q1 19.5 8.5 19.5 Q16 19.5 16 10.5 M8.5 19.5 V24.5 M4 24.5 H13" stroke="#f2f2f2" stroke-width="1.6" fill="none"/></svg>
<div class="a" style="left:51px;top:989px;width:12.5px;height:12.5px;background:#e8175d;border-radius:50%"></div>
<div class="a" style="left:56.5px;top:991.5px;width:1.6px;height:5px;background:#fff"></div>
<div class="a" style="left:56.5px;top:997.5px;width:1.6px;height:1.6px;background:#fff"></div>
<div class="t" style="left:35.55px;top:1021.01px;font-size:11.80px;color:#d9d9d9;letter-spacing:0.224px">Audio</div>
<svg style="left:79px;top:1001px" width="9" height="6"><path d="M1 5 L4.5 1.5 L8 5" stroke="#cfcfcf" stroke-width="1.3" fill="none"/></svg>
<svg style="left:131px;top:992px" width="26" height="25"><rect x="1" y="5.5" width="15.5" height="13" rx="2.5" stroke="#f2f2f2" stroke-width="1.6" fill="none"/><path d="M16.5 10 L24 5.5 V18.5 L16.5 14" stroke="#f2f2f2" stroke-width="1.6" fill="none" stroke-linejoin="round"/><path d="M1 23.5 L23 1" stroke="#e8175d" stroke-width="2.3"/></svg>
<div class="t" style="left:128.00px;top:1021.01px;font-size:11.80px;color:#d9d9d9;letter-spacing:0.206px">Video</div>
<svg style="left:739px;top:995px" width="20" height="19"><circle cx="6" cy="4" r="3" stroke="#f2f2f2" stroke-width="1.5" fill="none"/><path d="M1 15 Q1 9.5 6 9.5 Q8.5 9.5 9.5 11" stroke="#f2f2f2" stroke-width="1.5" fill="none"/><circle cx="13.5" cy="8" r="3" stroke="#f2f2f2" stroke-width="1.5" fill="none"/><rect x="8" y="13" width="11" height="5" rx="2.5" stroke="#f2f2f2" stroke-width="1.5" fill="none"/></svg>
<div class="t" style="left:765.00px;top:997.02px;font-size:10.61px;color:#d9d9d9">14</div>
<svg style="left:798px;top:1001px" width="9" height="6"><path d="M1 5 L4.5 1.5 L8 5" stroke="#cfcfcf" stroke-width="1.3" fill="none"/></svg>
<div class="t" style="left:718.45px;top:1021.01px;font-size:11.80px;color:#d9d9d9;letter-spacing:-0.013px">Participants</div>
<svg style="left:846px;top:993px" width="24" height="22"><path d="M7 4.5 Q7 1 11 1 H19 Q23 1 23 5 V10 Q23 13 20 13.5" stroke="#f2f2f2" stroke-width="1.5" fill="none"/><path d="M5 5.5 H15 Q19 5.5 19 9.5 V13.5 Q19 17.5 15 17.5 H9 L5.5 21 V17.5 Q1 17.5 1 13.5 V9.5 Q1 5.5 5 5.5 Z" stroke="#f2f2f2" stroke-width="1.5" fill="none" stroke-linejoin="round"/><circle cx="6" cy="11.5" r="1.1" fill="#f2f2f2"/><circle cx="10" cy="11.5" r="1.1" fill="#f2f2f2"/><circle cx="14" cy="11.5" r="1.1" fill="#f2f2f2"/></svg>
<svg style="left:888px;top:1001px" width="9" height="6"><path d="M1 5 L4.5 1.5 L8 5" stroke="#cfcfcf" stroke-width="1.3" fill="none"/></svg>
<div class="t" style="left:847.10px;top:1021.01px;font-size:11.80px;color:#d9d9d9;letter-spacing:-0.281px">Chat</div>
<svg style="left:931px;top:993px" width="26" height="22"><path d="M13 20.5 L3.5 12 Q0 8.5 1.5 5 Q3.5 1 7.5 1 Q11 1 13 4.5 Q15 1 18.5 1 Q23 1 24.5 5 Q26 9 22 12.5 Z" stroke="#f2f2f2" stroke-width="1.6" fill="none" stroke-linejoin="round"/></svg>
<div class="t" style="left:929.60px;top:1021.01px;font-size:11.80px;color:#d9d9d9;letter-spacing:-0.525px">React</div>
<div class="a" style="left:1021px;top:994px;width:24px;height:20px;background:#0bd675;border-radius:4px"></div>
<svg style="left:1027px;top:997px" width="12" height="14"><path d="M6 13 V3 M1.5 7.5 L6 2.5 L10.5 7.5" stroke="#000" stroke-width="2.2" fill="none"/></svg>
<div class="t" style="left:1018.00px;top:1021.01px;font-size:11.80px;color:#d9d9d9;letter-spacing:-0.298px">Share</div>
<svg style="left:1116px;top:991px" width="26" height="26"><path d="M10.5 5 Q11.5 14 20 15 Q11.5 16 10.5 25 Q9.5 16 1 15 Q9.5 14 10.5 5 Z" stroke="#f0c94a" stroke-width="1.6" fill="none" stroke-linejoin="round"/><path d="M20 0.5 Q20.5 4 24.5 4.5 Q20.5 5 20 9 Q19.5 5 15.5 4.5 Q19.5 4 20 0.5 Z" fill="#f0c94a"/></svg>
<div class="t" style="left:1090.00px;top:1021.01px;font-size:11.80px;color:#d9d9d9;letter-spacing:0.185px">AI Companion</div>
<svg style="left:1203px;top:993px" width="24" height="22"><path d="M1 8 V4 Q1 1 4 1 H8" stroke="#f2f2f2" stroke-width="1.6" fill="none"/><path d="M16 21 H19 Q22 21 22 18 V14" stroke="#f2f2f2" stroke-width="1.6" fill="none"/><circle cx="17.5" cy="5" r="3.5" stroke="#f2f2f2" stroke-width="1.6" fill="none"/><circle cx="5.5" cy="16.5" r="3.5" stroke="#f2f2f2" stroke-width="1.6" fill="none"/></svg>
<div class="t" style="left:1201.00px;top:1021.01px;font-size:11.80px;color:#d9d9d9;letter-spacing:0.026px">Apps</div>
<svg style="left:1284px;top:991px" width="26" height="26"><circle cx="13" cy="13" r="11.8" stroke="#f2f2f2" stroke-width="1.6" fill="none"/><circle cx="8" cy="13" r="1.3" fill="#f2f2f2"/><circle cx="13" cy="13" r="1.3" fill="#f2f2f2"/><circle cx="18" cy="13" r="1.3" fill="#f2f2f2"/></svg>
<div class="t" style="left:1283.55px;top:1021.01px;font-size:11.80px;color:#d9d9d9;letter-spacing:0.154px">More</div>
<svg style="left:1857px;top:991px" width="28" height="26"><path d="M13 1 H26 V20 L16.5 25 V6 Z" stroke="#e8175d" stroke-width="1.5" fill="none" stroke-linejoin="round"/><circle cx="8" cy="5" r="3" stroke="#f2f2f2" stroke-width="1.5" fill="#000"/><path d="M6 9 Q3 9 2.5 12 L1.5 16 H4 L5 13 L5.5 17 L3 23.5 H5.5 L8 18 L10.5 23.5 H13 L10.5 16.5 L10.5 12 L13 15.5 L15 14.5 L11.5 9.5 Q11 9 10 9 Z" stroke="#f2f2f2" stroke-width="1.4" fill="#000" stroke-linejoin="round"/></svg>
<div class="t" style="left:1856.80px;top:1021.01px;font-size:11.80px;color:#d9d9d9;letter-spacing:-0.630px">Leave</div>
<div class="a" style="left:0px;top:1040px;width:1914px;height:40px;background:#664426"></div>
<div class="a" style="left:1866px;top:1040px;width:48px;height:40px;background:#6c4a2a"></div>
<svg style="left:14px;top:1052px" width="18" height="16"><path d="M0 2.2 L7.5 1.2 V7.5 H0 Z M8.5 1 L17.5 0 V7.5 H8.5 Z M0 8.5 H7.5 V14.8 L0 13.8 Z M8.5 8.5 H17.5 V16 L8.5 15 Z" fill="#fff"/></svg>
<div class="a" style="left:47px;top:1040px;width:288px;height:40px;background:#f3f1ef"></div>
<svg style="left:58px;top:1051px" width="19" height="19"><circle cx="11.5" cy="7" r="5.5" stroke="#1a1a1a" stroke-width="1.4" fill="none"/><path d="M7.5 11 L1 17.5" stroke="#1a1a1a" stroke-width="1.6"/></svg>
<div class="t" style="left:87.50px;top:1053.82px;font-size:14.39px;color:#2a2a2a">Pretraživanje</div>
<svg style="left:350px;top:1051px" width="18" height="18"><rect x="2.5" y="4.5" width="10" height="9" stroke="#fff" stroke-width="1.4" fill="none"/><path d="M0 1 H15 M0 17 H15" stroke="#fff" stroke-width="1.4"/><path d="M16.5 3 V6 M16.5 8 V11 M16.5 13 V15" stroke="#fff" stroke-width="1.6"/></svg>
<svg style="left:397px;top:1047px" width="26" height="26"><defs><linearGradient id="eg" x1="0" y1="0" x2="1" y2="1"><stop offset="0" stop-color="#36c7ea"/><stop offset="0.6" stop-color="#2bb3a5"/><stop offset="1" stop-color="#66d36e"/></linearGradient></defs><circle cx="13" cy="13" r="12.5" fill="url(#eg)"/><path d="M1 13 Q1 25 14 25.5 Q20 25.5 23 22 Q16 24 12 20 Q8.5 16 13 13.5 Q6 12 1 13Z" fill="#0f6bc8"/><ellipse cx="15" cy="15" rx="5" ry="3.5" fill="#0f4ea0"/></svg>
<div class="a" style="left:390px;top:1077px;width:40px;height:3px;background:#f6d6b9"></div>
<svg style="left:447px;top:1050px" width="23" height="19"><path d="M0.5 2 Q0.5 0.5 2 0.5 H8 L10 2.5 H21 Q22.5 2.5 22.5 4 V17.5 Q22.5 18.5 21.5 18.5 H1.5 Q0.5 18.5 0.5 17.5 Z" fill="#f7c34a"/><rect x="0.5" y="5" width="22" height="13.5" rx="1" fill="#ffd86b"/><path d="M6 18.5 V12 H17 V18.5 M9 18.5 V15 H14 V18.5" fill="#2c8ff0"/></svg>
<svg style="left:496px;top:1049px" width="24" height="22"><rect x="9" y="1" width="14" height="20" fill="#fff" stroke="#2b5cb5" stroke-width="1"/><path d="M11 5 H21 M11 8 H21 M11 11 H21 M11 14 H21 M11 17 H21" stroke="#2b5cb5" stroke-width="1.2"/><rect x="0" y="2" width="13" height="18" fill="#2b5cb5"/><text x="6.5" y="15" font-size="9" font-weight="bold" fill="#fff" text-anchor="middle" font-family="Liberation Sans">W</text></svg>
<svg style="left:545px;top:1049px" width="24" height="22"><rect x="9" y="1" width="14" height="20" fill="#fff" stroke="#1e7145" stroke-width="1"/><path d="M11 5 H21 M11 8 H21 M11 11 H21 M11 14 H21 M11 17 H21 M16 3 V19" stroke="#1e7145" stroke-width="1.1"/><rect x="0" y="2" width="13" height="18" fill="#1e7145"/><text x="6.5" y="15" font-size="9" font-weight="bold" fill="#fff" text-anchor="middle" font-family="Liberation Sans">X</text></svg>
<svg style="left:594px;top:1048px" width="23" height="23"><path d="M6 1 H22 L17 22 H1 Z" fill="#b9e0ee" stroke="#8bbfd0" stroke-width="1"/><path d="M5 4 L19 6 L15 20 L3 19 Z" fill="#5fb6cc" opacity="0.7"/><path d="M6 1 H22 V3 H6Z" fill="#9fd0e0"/></svg>
<svg style="left:646px;top:1048px" width="19" height="24"><rect x="0.5" y="0.5" width="18" height="23" rx="1.5" fill="#8a9299" stroke="#6a7076"/><rect x="2.5" y="2.5" width="14" height="4" fill="#5ed0f0"/><g fill="#dfe4e8"><rect x="2.5" y="8.5" width="3.5" height="3"/><rect x="7.7" y="8.5" width="3.5" height="3"/><rect x="13" y="8.5" width="3.5" height="3"/><rect x="2.5" y="13" width="3.5" height="3"/><rect x="7.7" y="13" width="3.5" height="3"/><rect x="2.5" y="17.5" width="3.5" height="3"/><rect x="7.7" y="17.5" width="3.5" height="3"/></g><rect x="13" y="13" width="3.5" height="7.5" fill="#2a3f80"/></svg>
<svg style="left:692px;top:1048px" width="24" height="23"><rect x="10" y="6" width="13.5" height="11" fill="#fff"/><path d="M10.5 7 L17 12 L23 7" stroke="#0a64c0" stroke-width="1.5" fill="none"/><path d="M0 3 L14 0.5 V22.5 L0 20 Z" fill="#0a64c0"/><ellipse cx="7" cy="11.5" rx="3.5" ry="4.3" stroke="#fff" stroke-width="2" fill="none"/></svg>
<svg style="left:741px;top:1049px" width="24" height="23"><ellipse cx="12" cy="11.5" rx="11.5" ry="11.3" fill="#e8182c"/><ellipse cx="12" cy="11.5" rx="4.3" ry="8" fill="#664426"/></svg>
<svg style="left:791px;top:1048px" width="22" height="22"><rect x="0.8" y="0.8" width="20.4" height="20.4" fill="#001d33" stroke="#31a8ff" stroke-width="1.6"/><text x="11" y="15" font-size="10.5" font-weight="bold" fill="#31a8ff" text-anchor="middle" font-family="Liberation Sans">Ps</text></svg>
<svg style="left:839px;top:1048px" width="24" height="24"><circle cx="12" cy="12" r="12" fill="#ebe6e2"/><path d="M7 18 Q5 8.5 12 7 Q18 6.5 17.5 12 Q17 17.5 12.5 17.5 M17.3 12 V18" stroke="#e0553a" stroke-width="2" fill="none"/></svg>
<svg style="left:888px;top:1049px" width="24" height="22"><ellipse cx="17" cy="4.5" rx="6" ry="3" fill="#fff" stroke="#a4373a" stroke-width="1"/><rect x="11" y="4.5" width="12" height="13" fill="#fff"/><path d="M11 9 Q17 12 23 9 M11 13 Q17 16 23 13 M11 17.5 Q17 20.5 23 17.5" stroke="#a4373a" stroke-width="1.2" fill="none"/><rect x="0" y="2" width="13" height="19" fill="#a4373a"/><text x="6.5" y="15.5" font-size="9.5" font-weight="bold" fill="#fff" text-anchor="middle" font-family="Liberation Sans">A</text></svg>
<svg style="left:937px;top:1049px" width="24" height="23"><rect x="0.5" y="0.5" width="22.5" height="21.5" rx="1.5" fill="#f9d000"/><path d="M23 11 L12 22 H23 Z" fill="#2a2a2a"/><path d="M23 11 L12 22" stroke="#e0a000" stroke-width="1"/></svg>
<div class="a" style="left:929px;top:1077px;width:32px;height:3px;background:#f6d6b9"></div>
<div class="a" style="left:961px;top:1077px;width:8px;height:3px;background:#9c8a78"></div>
<div class="a" style="left:974px;top:1040px;width:48px;height:40px;background:#7d5429"></div>
<svg style="left:986px;top:1048px" width="24" height="24"><circle cx="12" cy="12" r="12" fill="#1b5cec"/><text x="12" y="15.5" font-size="10.5" font-weight="bold" fill="#fff" text-anchor="middle" font-family="Liberation Sans" letter-spacing="-0.4">zm</text></svg>
<div class="a" style="left:974px;top:1077px;width:48px;height:3px;background:#f6d6b9"></div>
<svg style="left:1036px;top:1047px" width="23" height="26"><path d="M6 3 Q1 8 3.5 14 M14 2 Q21 4 21 11 Q21 16 17 18" stroke="#e04a2a" stroke-width="3" fill="none"/><path d="M12 1 V14 L8 19 M12 14 L17 20" stroke="#ddd" stroke-width="2.2" fill="none"/><circle cx="6.5" cy="21" r="3" stroke="#2a8ad8" stroke-width="2" fill="none"/><circle cx="17.5" cy="21.5" r="3" stroke="#2a8ad8" stroke-width="2" fill="none"/></svg>
<div class="a" style="left:1027px;top:1077px;width:40px;height:3px;background:#f6d6b9"></div>
<svg style="left:1514px;top:1049px" width="24" height="24"><ellipse cx="10" cy="5" rx="9" ry="3.8" fill="#f6b93b"/><ellipse cx="14" cy="10" rx="9.5" ry="3.8" fill="#f0a020"/><ellipse cx="10" cy="15" rx="9" ry="3.8" fill="#f6b93b"/><path d="M7 19.5 L10 23 L13 19.5" stroke="#d8402a" stroke-width="1.8" fill="none"/></svg>
<div class="t" style="left:1545.90px;top:1054.45px;font-size:12.46px;color:#f2f2f2">USD/KES</div>
<div class="t" style="left:1609.90px;top:1053.91px;font-size:13.10px;color:#e87462">-0.38%</div>
<svg style="left:1676px;top:1053px" width="14" height="9"><path d="M1 8 L7 1.5 L13 8" stroke="#fff" stroke-width="1.4" fill="none"/></svg>
<svg style="left:1699px;top:1050px" width="19" height="19"><path d="M1 3 L17 1 V15 L1 15 Z" stroke="#fff" stroke-width="1.2" fill="none"/><path d="M6 10 Q6 6 10 6 L12 7 M12 4.5 V7.5 H9" stroke="#fff" stroke-width="1.1" fill="none"/><circle cx="13.5" cy="15" r="3" fill="#ff9a1a"/></svg>
<svg style="left:1722px;top:1051px" width="18" height="17"><rect x="1" y="1" width="3.5" height="4" stroke="#fff" stroke-width="1" fill="none"/><path d="M2.5 5 V12" stroke="#fff" stroke-width="1"/><rect x="5" y="3" width="12.5" height="9" stroke="#fff" stroke-width="1.2" fill="none"/><path d="M11 12 V15 M7 15.5 H15" stroke="#fff" stroke-width="1.2"/></svg>
<svg style="left:1746px;top:1052px" width="18" height="16"><path d="M1 5.5 H4 L8.5 1.5 V14.5 L4 10.5 H1 Z" stroke="#fff" stroke-width="1.2" fill="none" stroke-linejoin="round"/><path d="M11 5 Q12.5 8 11 11 M13.5 3 Q16 8 13.5 13" stroke="#fff" stroke-width="1.1" fill="none"/><path d="M15.5 1.5 Q19 8 15.5 14.5" stroke="#9a8a7a" stroke-width="1" fill="none"/></svg>
<div class="t" style="left:1773.00px;top:1055.98px;font-size:10.65px;color:#f2f2f2">HRV</div>
<div class="t" style="left:1821.00px;top:1046.21px;font-size:10.39px;color:#f2f2f2">10:21</div>
<div class="t" style="left:1809.80px;top:1064.69px;font-size:10.41px;color:#f2f2f2">15.5.2024.</div>
<svg style="left:1877px;top:1052px" width="18" height="17"><path d="M1 1 H17 V12.5 H11 L9 15.5 L7 12.5 H1 Z" stroke="#fff" stroke-width="1.2" fill="none" stroke-linejoin="round"/></svg>
</body></html>
